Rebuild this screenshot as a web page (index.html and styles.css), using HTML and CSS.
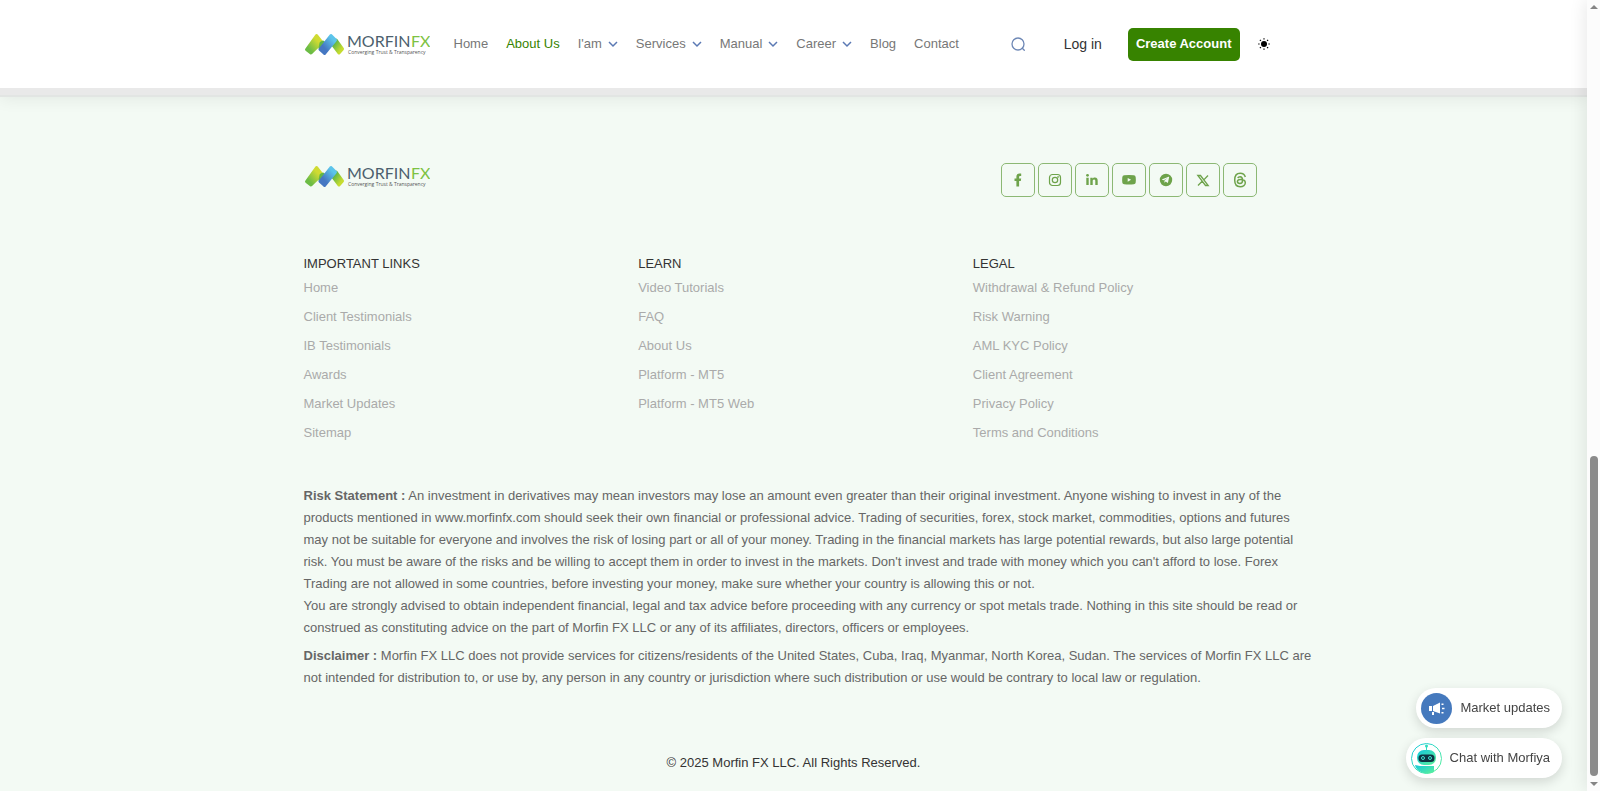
FILE: index.html
```html
<!DOCTYPE html>
<html lang="en">
<head>
  <meta charset="UTF-8" />
  <meta name="viewport" content="width=device-width, initial-scale=1.0" />
  <title>Morfin FX</title>
  <link rel="stylesheet" href="styles.css">
</head>
<body>
  <!-- shared icons -->
  <svg width="0" height="0" class="defs" aria-hidden="true">
    <defs>
      <linearGradient id="lime" x1="0" y1="1" x2="1" y2="0">
        <stop offset="0.2" stop-color="#6cbc45" />
        <stop offset="0.7" stop-color="#d0db32" />
      </linearGradient>
      <linearGradient id="lime2" x1="0" y1="0" x2="1" y2="1">
        <stop offset="0.2" stop-color="#5fb548" />
        <stop offset="0.8" stop-color="#c6dc2f" />
      </linearGradient>
      <linearGradient id="blue" x1="0" y1="1" x2="1" y2="0">
        <stop offset="0.3" stop-color="#4577c2" />
        <stop offset="0.8" stop-color="#5cc4ea" />
      </linearGradient>
      <linearGradient id="bot" x1="0" y1="0" x2="1" y2="1">
        <stop offset="0" stop-color="#14c8dc" />
        <stop offset="1" stop-color="#5cf29a" />
      </linearGradient>
    </defs>
    <symbol id="mark" viewBox="0 0 42 26">
      <g stroke-width="3" stroke-linejoin="round">
        <path fill="url(#lime2)" stroke="url(#lime2)" d="M32 9l6.500 9-3.500 4-6-8z" />
        <path fill="url(#lime)" stroke="url(#lime)" d="M2.500 18.500L12.500 4.500l5.500 7-11 10.500z" />
        <path fill="#62b548" d="M17 12l2-1 1 1-4 5z" stroke="#62b548" />
        <path fill="url(#blue)" stroke="url(#blue)" d="M16 18.500L27 4.500l4.500 4.500-11 13.500z" />
      </g>
    </symbol>
    <symbol id="chevron" viewBox="0 0 10 10">
      <path d="M1 3l4 4 4-4" fill="none" stroke="#5b79b4" stroke-width="1.5" />
    </symbol>
  </svg>

  <div class="page">
    <header class="header">
      <div class="container nav">
        <a href="#" class="logo" aria-label="Morfin FX">
          <svg viewBox="0 0 126 26">
            <use href="#mark" width="42" height="26" />
            <text x="43" y="16" class="logo-name">MORFIN</text>
            <text x="107" y="16" class="logo-fx">FX</text>
            <text x="44" y="23" class="logo-tag">Converging Trust &amp; Transparency</text>
          </svg>
        </a>
        <nav class="menu">
          <a href="#">Home</a>
          <a href="#" class="active">About Us</a>
          <a href="#">I'am <svg><use href="#chevron" /></svg></a>
          <a href="#">Services <svg><use href="#chevron" /></svg></a>
          <a href="#">Manual <svg><use href="#chevron" /></svg></a>
          <a href="#">Career <svg><use href="#chevron" /></svg></a>
          <a href="#">Blog</a>
          <a href="#">Contact</a>
        </nav>
        <div class="actions">
          <button class="icon-btn" aria-label="Search">
            <svg width="16" height="16" viewBox="0 0 16 16" fill="none" stroke="#6d87b5" stroke-width="1.3" stroke-linecap="round">
              <circle cx="8" cy="8" r="6" />
              <path d="M12.3 12.3l2 2" />
            </svg>
          </button>
          <a href="#" class="login">Log in</a>
          <button class="create">Create Account</button>
          <button class="icon-btn" aria-label="Toggle theme">
            <svg width="12" height="12" viewBox="0 0 12 12">
              <circle cx="6" cy="6" r="3" />
              <path d="M6 .2v1.4M6 10.4v1.4M.2 6h1.4M10.4 6h1.4M1.9 1.9l1 1M9.1 9.1l1 1M1.9 10.1l1-1M9.1 2.9l1-1" stroke="#000" stroke-width="1.2" />
            </svg>
          </button>
        </div>
      </div>
    </header>

    <footer class="footer">
      <div class="container">
        <div class="footer-top">
          <a href="#" class="logo" aria-label="Morfin FX">
            <svg viewBox="0 0 126 26">
              <use href="#mark" width="42" height="26" />
              <text x="43" y="16" class="logo-name">MORFIN</text>
              <text x="107" y="16" class="logo-fx">FX</text>
              <text x="44" y="23" class="logo-tag">Converging Trust &amp; Transparency</text>
            </svg>
          </a>
          <div class="social">
            <a href="#" aria-label="Facebook"><svg viewBox="0 0 14 14"><path d="M5.400 13.500V8H3.500V5.400h1.900V3.700C5.400 1.700 6.600.6 8.500.6c.9 0 1.700.1 1.700.1V3H9.300c-.9 0-1.200.6-1.200 1.100v1.300h2.100L9.800 8H8.100v5.500z" /></svg></a>
            <a href="#" aria-label="Instagram"><svg viewBox="0 0 14 14" fill="none" stroke="#6ea34b" stroke-width="1.2"><rect x="1.500" y="1.500" width="11" height="11" rx="3" /><circle cx="7" cy="7" r="2.700" /><circle cx="10.100" cy="3.900" r=".3" /></svg></a>
            <a href="#" aria-label="LinkedIn"><svg viewBox="0 0 14 14"><circle cx="2.500" cy="2.300" r="1.400" /><path d="M1.300 4.700h2.400V12H1.300zM5.300 4.700h2.300v1c.4-.7 1.200-1.200 2.200-1.200 2.300 0 2.900 1.500 2.900 3.500v4h-2.400V8.400c0-.9-.1-1.900-1.200-1.900S7.700 7.300 7.700 8.300V12H5.300z" /></svg></a>
            <a href="#" aria-label="YouTube"><svg viewBox="0 0 14 14"><path fill-rule="evenodd" d="M2.200 2.300q4.800-.5 9.600 0 1.700.2 1.900 1.900.3 2.600 0 5.200-.2 1.700-1.900 1.900-4.800.5-9.600 0Q.5 11.100.3 9.400 0 6.800.3 4.200.5 2.500 2.200 2.300zM5.700 4.900v3.900L9.100 6.800z" /></svg></a>
            <a href="#" aria-label="Telegram"><svg viewBox="0 0 14 14"><path fill-rule="evenodd" d="M7 .8a6.200 6.200 0 1 0 0 12.400A6.200 6.200 0 0 0 7 .8zm3.100 3.400L9 9.500c-.1.400-.3.500-.6.300L6.700 8.600l-.9.900c-.2.200-.4.100-.4-.2L5.500 7.600l3-2.700-3.700 2.300-1.600-.5c-.4-.1-.3-.4.1-.5l6.300-2.400c.4-.1.600.1.500.4z" /></svg></a>
            <a href="#" aria-label="X"><svg viewBox="0 0 14 14" fill="none" stroke="#6ea34b" stroke-width="1.300"><path d="M1.800 2.500h2.700l7.700 10H9.500zM12 2.500L7.800 6.900M6.200 8.300L2 12.500" /></svg></a>
            <a href="#" aria-label="Threads"><svg class="lg" viewBox="0 0 16 16" fill="none" stroke="#6ea34b" stroke-width="1.500"><path d="M13.300 5C12.600 2.400 11 1.300 8.200 1.300 4.500 1.300 2.700 3.800 2.700 8s1.800 6.700 5.500 6.700c3 0 5.100-1.700 5.100-3.900 0-2.300-2.200-3.400-4.700-3.400-2 0-3.200.8-3.200 2.200 0 1.200 1 1.900 2.400 1.900 1.900 0 2.800-1.200 2.800-3.300 0-2.300-.9-3.400-2.500-3.400-1.100 0-1.900.4-2.400 1.200" /></svg></a>
          </div>
        </div>

        <div class="links">
          <div class="col">
            <h4>IMPORTANT LINKS</h4>
            <a href="#">Home</a>
            <a href="#">Client Testimonials</a>
            <a href="#">IB Testimonials</a>
            <a href="#">Awards</a>
            <a href="#">Market Updates</a>
            <a href="#">Sitemap</a>
          </div>
          <div class="col">
            <h4>LEARN</h4>
            <a href="#">Video Tutorials</a>
            <a href="#">FAQ</a>
            <a href="#">About Us</a>
            <a href="#">Platform - MT5</a>
            <a href="#">Platform - MT5 Web</a>
          </div>
          <div class="col">
            <h4>LEGAL</h4>
            <a href="#">Withdrawal &amp; Refund Policy</a>
            <a href="#">Risk Warning</a>
            <a href="#">AML KYC Policy</a>
            <a href="#">Client Agreement</a>
            <a href="#">Privacy Policy</a>
            <a href="#">Terms and Conditions</a>
          </div>
        </div>

        <div class="legal">
          <p><strong>Risk Statement :</strong> An investment in derivatives may mean investors may lose an amount even greater than their original investment. Anyone wishing to invest in any of the<br />
            products mentioned in www.morfinfx.com should seek their own financial or professional advice. Trading of securities, forex, stock market, commodities, options and futures<br />
            may not be suitable for everyone and involves the risk of losing part or all of your money. Trading in the financial markets has large potential rewards, but also large potential<br />
            risk. You must be aware of the risks and be willing to accept them in order to invest in the markets. Don't invest and trade with money which you can't afford to lose. Forex<br />
            Trading are not allowed in some countries, before investing your money, make sure whether your country is allowing this or not.<br />
            You are strongly advised to obtain independent financial, legal and tax advice before proceeding with any currency or spot metals trade. Nothing in this site should be read or<br />
            construed as constituting advice on the part of Morfin FX LLC or any of its affiliates, directors, officers or employees.</p>
          <p><strong>Disclaimer :</strong> Morfin FX LLC does not provide services for citizens/residents of the United States, Cuba, Iraq, Myanmar, North Korea, Sudan. The services of Morfin FX LLC are<br />
            not intended for distribution to, or use by, any person in any country or jurisdiction where such distribution or use would be contrary to local law or regulation.</p>
        </div>

        <p class="copyright">© 2025 Morfin FX LLC. All Rights Reserved.</p>
      </div>
    </footer>

    <div class="floating">
      <button class="pill">
        <svg width="31" height="31" viewBox="0 0 31 31">
          <circle cx="15.500" cy="15.500" r="15.500" fill="#4579bd" />
          <path fill="#fff" d="M8 13h3v5H8zM12 13l7-3.500v11L12 18zM11 19h2v3h-2zM20.500 10.500h2V12h-2zM21 14.700h2.500v1.500H21zM20.500 19h2v1.500h-2z" />
        </svg>
        Market updates
      </button>
      <button class="pill">
        <svg width="31" height="31" viewBox="0 0 31 31">
          <circle cx="15.500" cy="15.500" r="15" fill="#fff" stroke="url(#bot)" />
          <circle cx="15.500" cy="3" r="1.500" fill="#2ddcc0" />
          <path d="M15.500 3v5" stroke="#2ddcc0" />
          <rect x="6" y="7" width="19" height="15" rx="7" fill="url(#bot)" />
          <path fill="url(#bot)" d="M9 23h14v6q-7 3-13 0-5-2-6-7z" />
          <rect x="7.500" y="11.500" width="16" height="7.500" rx="3.500" fill="#0d3443" />
          <g fill="none" stroke="#3fe3d2"><circle cx="12" cy="15" r="1.500" /><circle cx="19" cy="15" r="1.500" /></g>
        </svg>
        Chat with Morfiya
      </button>
    </div>
  </div>

  <div class="scrollbar" aria-hidden="true">
    <span class="arrow up"></span>
    <span class="thumb"></span>
    <span class="arrow down"></span>
  </div>
</body>
</html>
```
FILE: styles.css
```css
* {
  box-sizing: border-box;
}

body {
  display: flex;
  min-height: 100vh;
  margin: 0;
  font-family: "Liberation Sans", Arial, sans-serif;
  font-size: 13px;
  line-height: 22px;
  color: #666;
  background: #f3faf4;
}

a {
  color: inherit;
  text-decoration: none;
}

button {
  font: inherit;
  border: none;
  cursor: pointer;
}

.defs {
  position: absolute;
}

.page {
  flex: 1;
  display: flex;
  flex-direction: column;
}

.container {
  width: 100%;
  max-width: 1004px;
  margin: 0 auto;
  padding: 0 12px;
}

/* header */
.header {
  background: #fff;
  border-bottom: 7px solid #e9e9e9;
  box-shadow: 0 2px 0 #e2e5e3, 0 4px 16px rgba(0, 0, 0, 0.07);
}

.nav {
  display: flex;
  align-items: center;
  height: 88px;
}

.logo svg {
  display: block;
  width: 126px;
  height: 26px;
}

.logo-name,
.logo-fx {
  font-family: Lato, sans-serif;
  font-size: 16px;
  fill: #4b5f6e;
}

.logo-fx {
  fill: #7dc242;
}

.logo-tag {
  font-family: "Open Sans", sans-serif;
  font-size: 5px;
  fill: #555;
}

.menu {
  display: flex;
  gap: 18px;
  margin-left: 24px;
}

.menu a {
  display: flex;
  align-items: center;
  gap: 6px;
  color: #777;
}

.menu .active {
  color: #378300;
}

.menu svg {
  width: 10px;
  height: 10px;
}

.actions {
  display: flex;
  align-items: center;
  margin-left: auto;
  padding-right: 14px;
}

.icon-btn {
  padding: 0;
  background: none;
}

.icon-btn svg {
  display: block;
}

.login {
  margin: 0 26px 0 38px;
  font-size: 14px;
  color: #333;
}

.create {
  margin-right: 18px;
  padding: 0 8px;
  height: 33px;
  border-radius: 5px;
  background: #378300;
  color: #fff;
  font-weight: bold;
}

/* footer */
.footer {
  flex: 1;
  padding-top: 68px;
}

.footer-top {
  display: flex;
  justify-content: space-between;
  padding-right: 27px;
}

.social {
  display: flex;
  gap: 3px;
}

.social a {
  display: flex;
  align-items: center;
  justify-content: center;
  width: 34px;
  height: 34px;
  border: 1px solid #8cb874;
  border-radius: 5px;
}

.social svg {
  width: 14px;
  height: 14px;
  fill: #6ea34b;
}

.social svg[fill="none"] {
  fill: none;
}

.social .lg {
  width: 16px;
  height: 16px;
}

.links {
  display: grid;
  grid-template-columns: repeat(3, 1fr);
  gap: 24px;
  margin-top: 58px;
}

.col {
  display: flex;
  flex-direction: column;
  align-items: flex-start;
}

.col h4 {
  margin: 0;
  font-size: 13px;
  font-weight: normal;
  line-height: 18px;
  color: #333;
}

.col a {
  line-height: 29px;
  color: #aaa;
}

.legal {
  margin-top: 38px;
}

.legal p {
  margin: 0 0 6px;
}

/* keep the statement on its own line breaks on wide screens */
@media (min-width: 1100px) {
  .legal p {
    white-space: nowrap;
  }
}

.copyright {
  margin: 63px 0 16px;
  text-align: center;
  color: #333;
}

/* floating buttons */
.floating {
  position: fixed;
  right: 38px;
  bottom: 13px;
  display: flex;
  flex-direction: column;
  align-items: flex-end;
  gap: 10px;
}

.pill {
  display: flex;
  align-items: center;
  gap: 8px;
  height: 40px;
  padding: 0 12px 0 5px;
  border-radius: 20px;
  background: #fff;
  color: #444;
  box-shadow: 0 4px 12px rgba(0, 0, 0, 0.14);
}

/* scrollbar */
.scrollbar {
  position: sticky;
  top: 0;
  display: flex;
  flex-direction: column;
  align-items: center;
  width: 13px;
  height: 100vh;
  padding: 5px 0;
  background: #fcfcfc;
  box-shadow: 0 0 18px rgba(0, 0, 0, 0.12);
}

.arrow {
  border: 4px solid transparent;
}

.up {
  border-top: none;
  border-bottom-color: #858585;
}

.down {
  border-bottom: none;
  border-top-color: #858585;
}

.thumb {
  width: 8px;
  height: 41%;
  margin: auto 0 6px;
  border-radius: 4px;
  background: #8b8b8b;
}
```
